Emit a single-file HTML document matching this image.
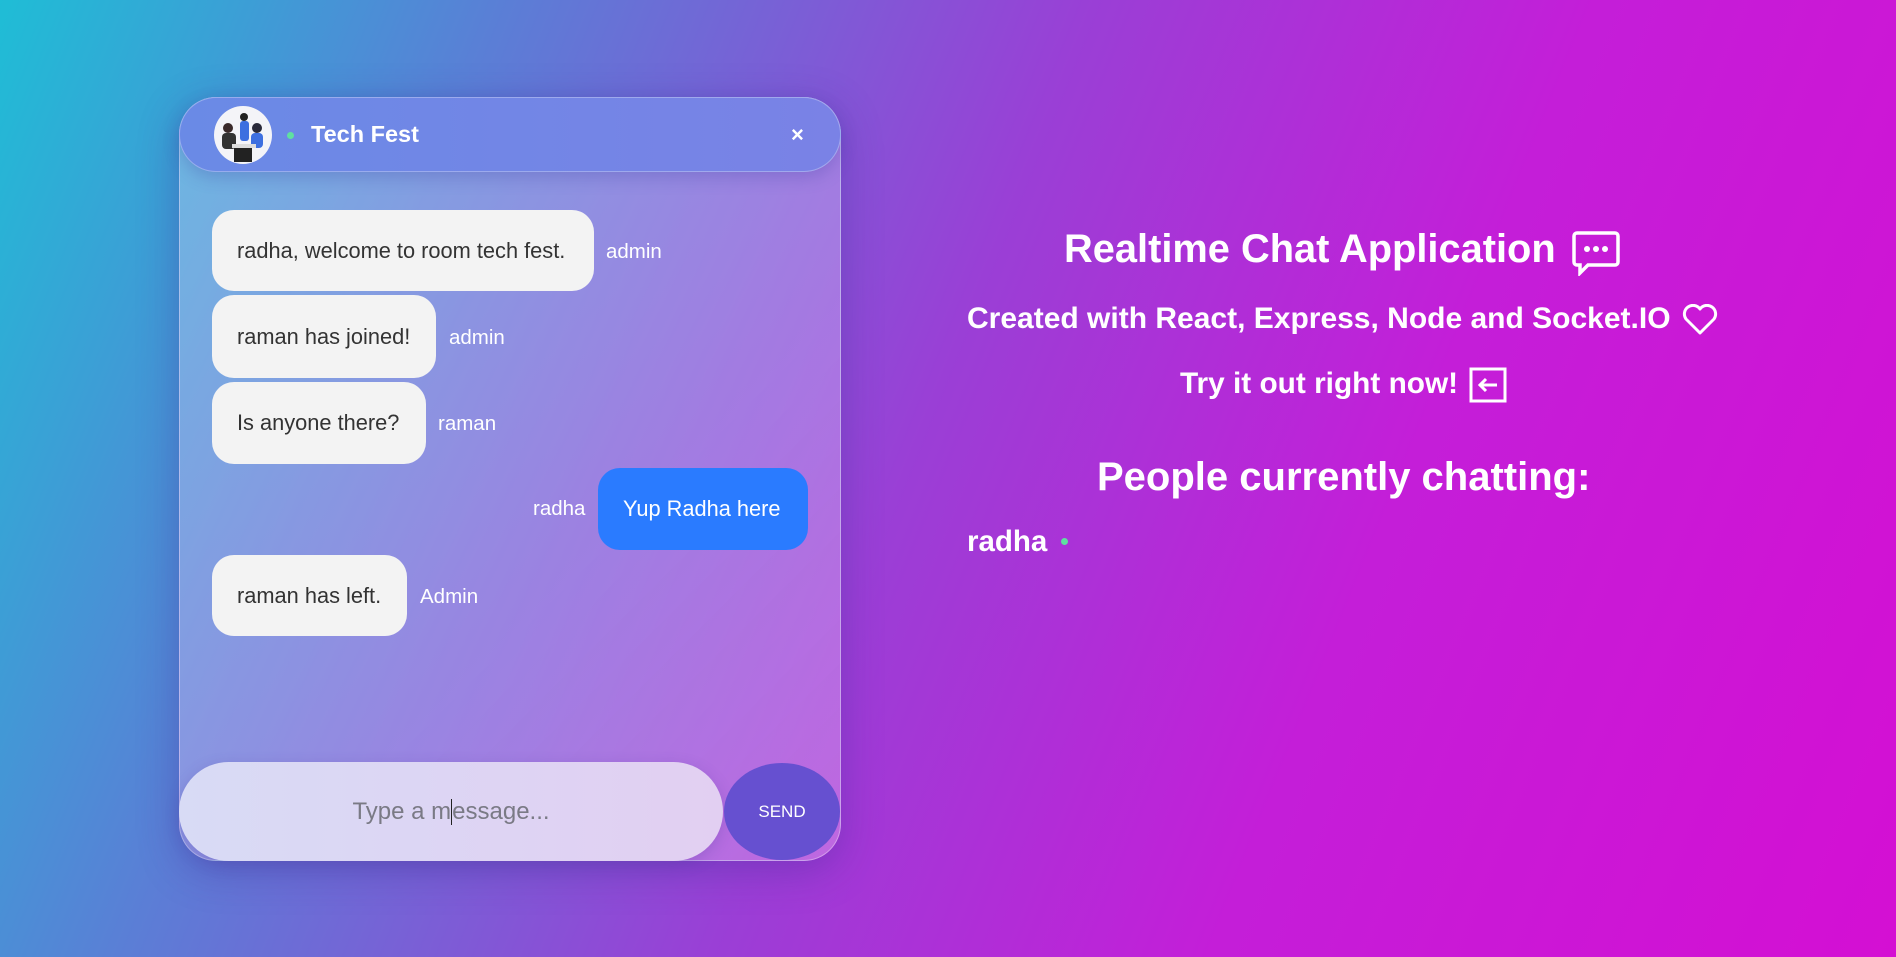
<!DOCTYPE html>
<html><head><meta charset="utf-8"><style>
*{margin:0;padding:0;box-sizing:border-box}
html,body{width:1896px;height:957px;overflow:hidden}
body{font-family:"Liberation Sans",Arial,sans-serif;position:relative;
background:linear-gradient(112deg,#1fbdd6 0%,#5a7fd6 22%,#9a3fd6 48%,#c41ed8 70%,#d40fd3 100%);}
.card{position:absolute;left:179px;top:97px;width:662px;height:764px;border-radius:37px;
background:linear-gradient(135deg,rgba(170,210,240,.45),rgba(200,170,240,.45) 60%,rgba(220,150,235,.5));
border:1px solid rgba(255,255,255,.35);box-shadow:0 10px 40px rgba(60,40,150,.35)}
.hdr{position:absolute;left:179px;top:97px;width:662px;height:75px;border-radius:37px;
background:linear-gradient(90deg,#6a8ae6,#7a82e6);border:1px solid rgba(255,255,255,.3);box-shadow:0 6px 16px rgba(60,60,160,.25)}
.av{position:absolute;left:214px;top:106px;width:58px;height:58px;border-radius:50%;background:#f4f4f8;overflow:hidden}
.dot{position:absolute;width:7px;height:7px;border-radius:50%;background:#5fe0a0}
.t{position:absolute;color:#fff;white-space:nowrap}
.b{position:absolute;background:#f3f3f3;color:#333;border-radius:22px;font-size:21.8px;display:flex;align-items:center;padding-left:25px;white-space:nowrap}
.n{position:absolute;color:#fff;font-size:20.5px}
.inp{position:absolute;left:179px;top:762px;width:544px;height:99px;border-radius:50px;
background:linear-gradient(90deg,#d8dbf5,#e2cff2);box-shadow:0 4px 14px rgba(80,60,160,.25);
display:flex;align-items:center;justify-content:center;color:#7a7a85;font-size:24px}
.send{position:absolute;left:724px;top:763px;width:116px;height:97px;border-radius:50%;background:#6650d0;
color:#fff;font-size:17px;display:flex;align-items:center;justify-content:center}
</style></head><body>
<div class="card"></div>
<div class="hdr"></div>
<div class="av"><svg width="58" height="58" viewBox="0 0 58 58">
<circle cx="14" cy="22" r="5" fill="#3a2a2a"/><rect x="8" y="27" width="14" height="16" rx="4" fill="#333"/>
<circle cx="30" cy="11" r="4" fill="#222"/><rect x="26" y="15" width="9" height="20" rx="3" fill="#3d6fe0"/>
<circle cx="43" cy="22" r="5" fill="#2a2a3a"/><rect x="37" y="27" width="12" height="15" rx="4" fill="#3d6fe0"/>
<rect x="18" y="38" width="24" height="4" fill="#ddd"/><rect x="20" y="42" width="18" height="14" fill="#222"/>
</svg></div>
<div class="dot" style="left:287px;top:132px"></div>
<div class="t" style="left:311px;top:121px;font-size:23.5px;font-weight:bold">Tech Fest</div>
<div class="t" style="left:791px;top:122px;font-size:22px;font-weight:bold">×</div>

<div class="b" style="left:212px;top:210px;width:382px;height:81px">radha, welcome to room tech fest.</div>
<div class="n" style="left:606px;top:240px">admin</div>
<div class="b" style="left:212px;top:295px;width:224px;height:83px">raman has joined!</div>
<div class="n" style="left:449px;top:326px">admin</div>
<div class="b" style="left:212px;top:382px;width:214px;height:82px">Is anyone there?</div>
<div class="n" style="left:438px;top:412px">raman</div>
<div class="n" style="left:533px;top:497px">radha</div>
<div class="b" style="left:598px;top:468px;width:210px;height:82px;background:#2a7bff;color:#fff">Yup Radha here</div>
<div class="b" style="left:212px;top:555px;width:195px;height:81px">raman has left.</div>
<div class="n" style="left:420px;top:585px">Admin</div>

<div class="inp">Type a m<span style="display:inline-block;width:1px;height:26px;background:#222"></span>essage...</div>
<div class="send">SEND</div>

<div class="t" style="left:1064px;top:227px;font-size:39.8px;font-weight:bold">Realtime Chat Application</div>
<svg style="position:absolute;left:1572px;top:230px" width="48" height="46" viewBox="0 0 48 46"><path d="M5 3h38a3 3 0 0 1 3 3v26a3 3 0 0 1-3 3H16l-8 8v-8H5a3 3 0 0 1-3-3V6a3 3 0 0 1 3-3z" fill="none" stroke="#fff" stroke-width="3.5"/><circle cx="15" cy="19" r="3" fill="#fff"/><circle cx="24" cy="19" r="3" fill="#fff"/><circle cx="33" cy="19" r="3" fill="#fff"/></svg>
<div class="t" style="left:967px;top:302px;font-size:30px;font-weight:bold">Created with React, Express, Node and Socket.IO</div>
<svg style="position:absolute;left:1682px;top:304px" width="36" height="32" viewBox="0 0 36 32"><path d="M18 29L4 15a8 8 0 0 1 14-10a8 8 0 0 1 14 10z" fill="none" stroke="#fff" stroke-width="3" stroke-linejoin="round"/></svg>
<div class="t" style="left:1180px;top:367px;font-size:29.8px;font-weight:bold">Try it out right now!</div>
<svg style="position:absolute;left:1469px;top:367px" width="38" height="36" viewBox="0 0 38 36"><rect x="2" y="2" width="34" height="32" fill="none" stroke="#fff" stroke-width="3"/><path d="M28 18H11M17 12l-6 6 6 6" fill="none" stroke="#fff" stroke-width="3"/></svg>
<div class="t" style="left:1097px;top:455px;font-size:40px;font-weight:bold">People currently chatting:</div>
<div class="t" style="left:967px;top:525px;font-size:29.5px;font-weight:bold">radha</div>
<div class="dot" style="left:1061px;top:538px"></div>
</body></html>
